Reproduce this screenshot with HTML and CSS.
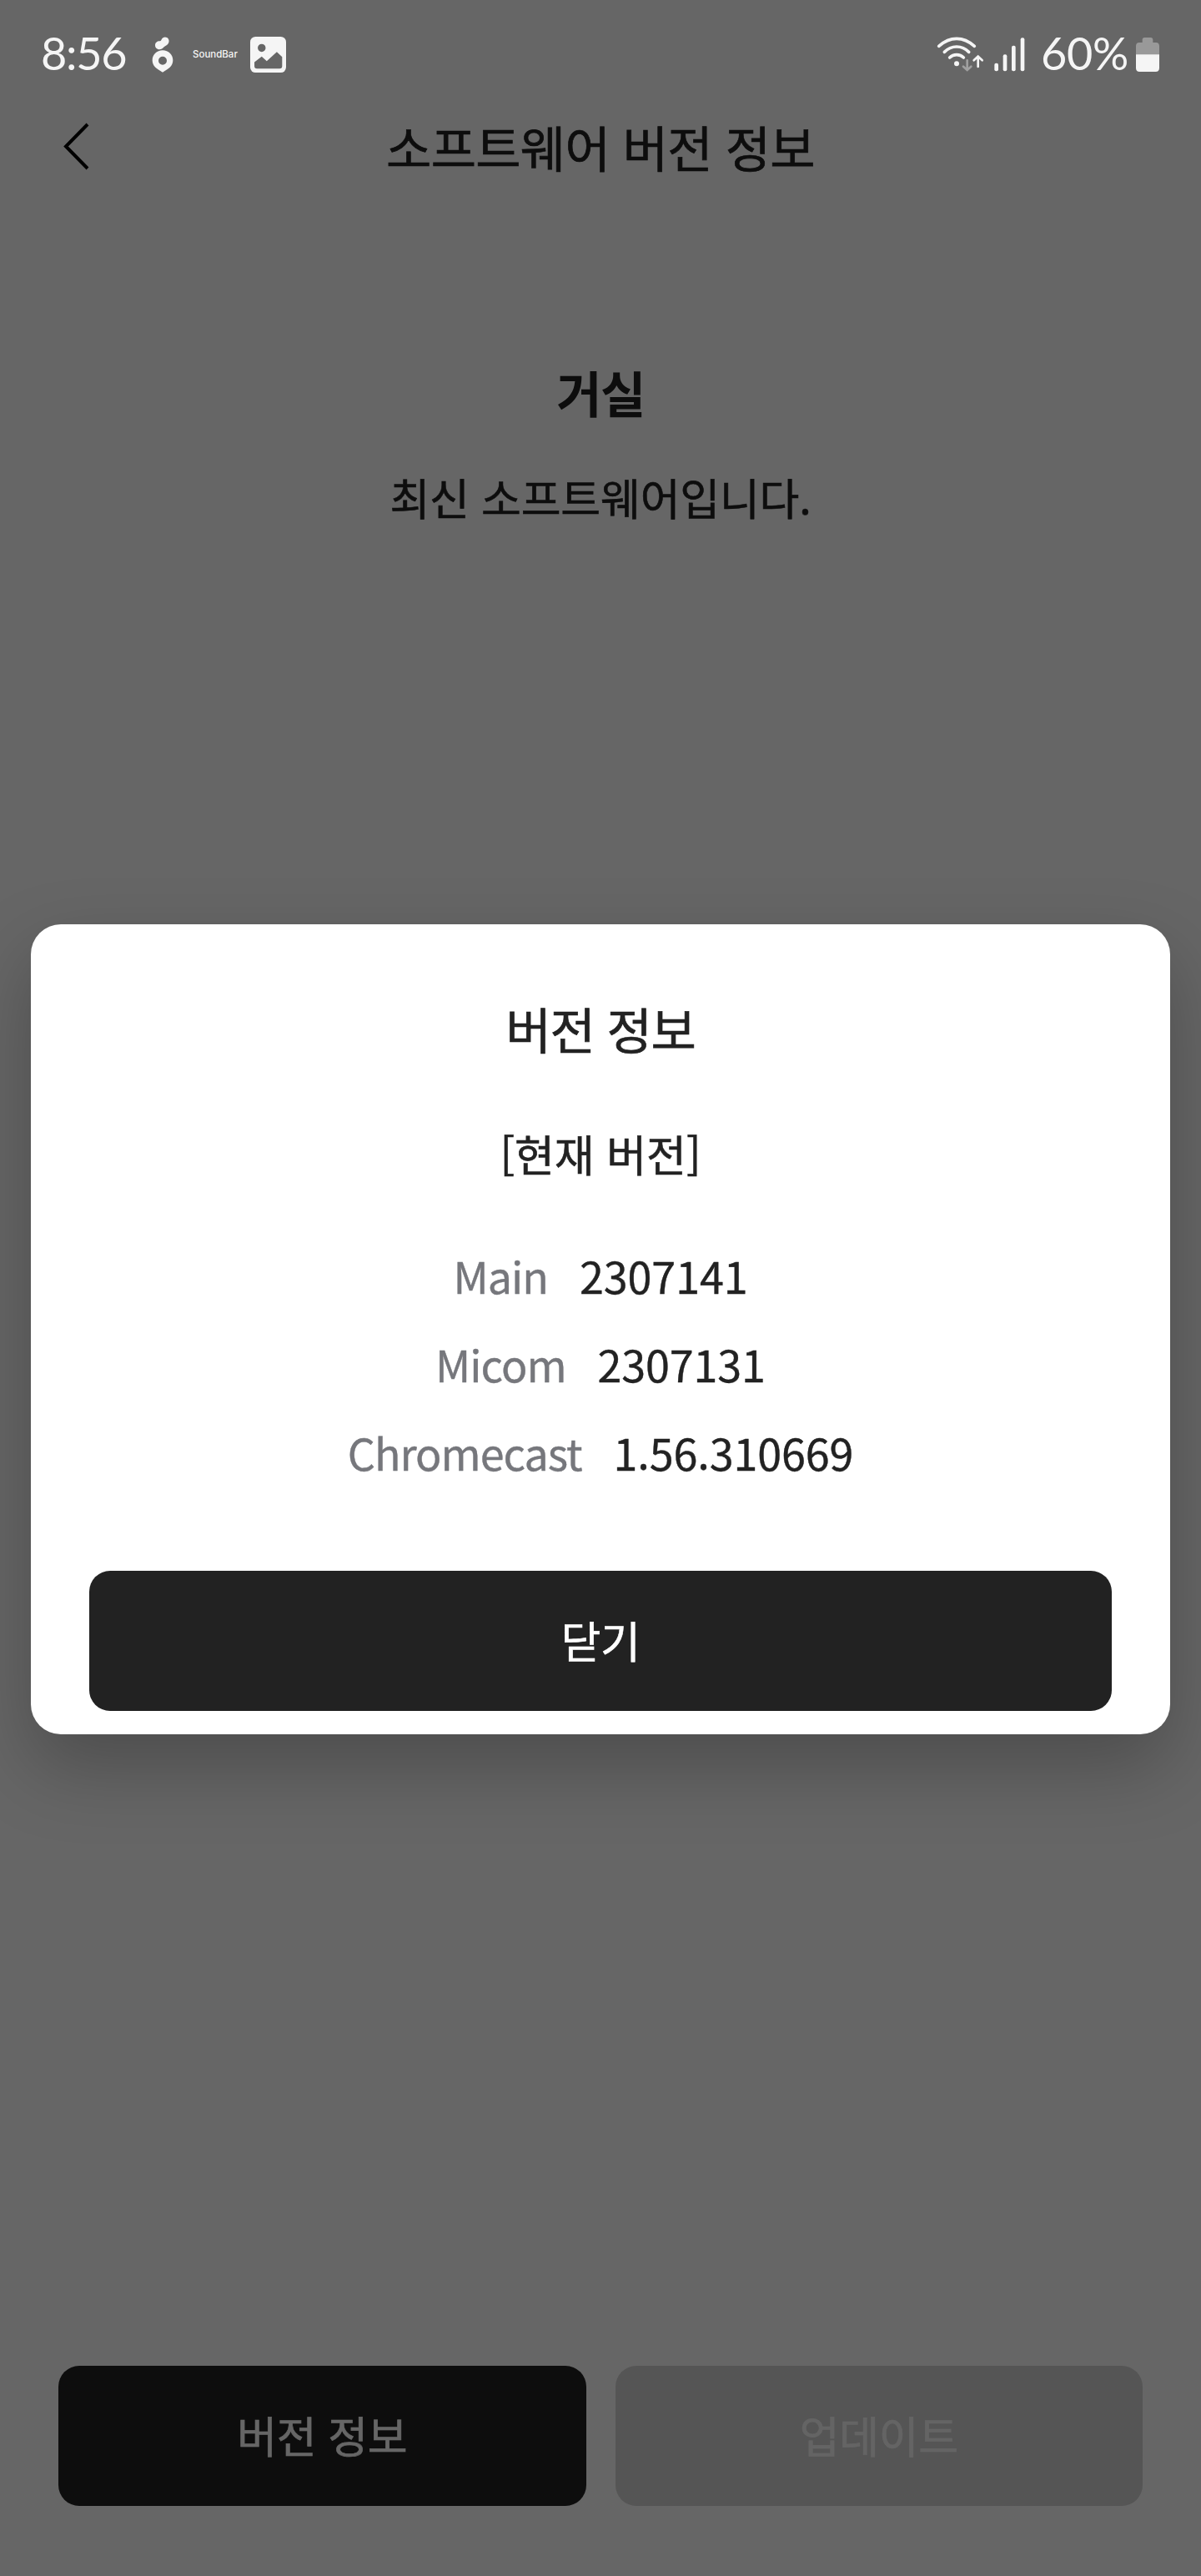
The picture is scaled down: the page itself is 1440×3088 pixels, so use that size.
FILE: index.html
```html
<!DOCTYPE html>
<html lang="ko">
<head>
  <meta charset="UTF-8">
  <meta name="viewport" content="width=device-width, initial-scale=1.0">
  <title>소프트웨어 버전 정보</title>
  <link rel="stylesheet" href="styles.css">
</head>
<body>
  <!-- Phone status bar -->
  <div class="status-bar">
    <div class="status-left">
      <span class="clock">8:56</span>
      <svg class="icon-carrot" width="26" height="43" viewBox="0 0 78 129" fill="#f5f5f5">
        <path d="M12 31c0-9 7-15 16-15 3 0 4-1 6-4 5-11 14-12 20-9 9 4 10 16 4 23-5 6-10 7-14 11-5 6-10 9-17 9-9 0-15-7-15-15z"/>
        <path fill-rule="evenodd" d="M39 49c21 0 37 15 37 36 0 20-15 31-37 43C17 116 2 105 2 85c0-21 16-36 37-36zm0 22a15 15 0 1 0 0 30 15 15 0 0 0 0-30z"/>
      </svg>
      <span class="app-name">SoundBar</span>
      <svg class="icon-picture" width="43" height="43" viewBox="0 0 128 128">
        <rect width="128" height="128" rx="19" fill="#f5f5f5"/>
        <circle cx="41" cy="40" r="14" fill="#666"/>
        <path d="M15 91l26-20 18 16 36-33 19 18v33c0 6-3 9-9 9H24c-6 0-9-3-9-9z" fill="#666"/>
      </svg>
    </div>
    <div class="status-right">
      <svg class="icon-wifi" width="57" height="42" viewBox="0 0 171 126" fill="none" stroke="#f5f5f5" stroke-width="11" stroke-linecap="round">
        <path d="M8 34Q38 7 72 7t64 27"/>
        <path d="M28 55Q47 36 72 36t44 19"/>
        <path d="M47 75Q57 65 72 65t25 10"/>
        <circle cx="72" cy="97" r="9" fill="#f5f5f5" stroke="none"/>
        <g stroke-width="8">
          <path d="M110 85v33M96 107l14 13 14-13" stroke="#a0a0a0"/>
          <path d="M149 108V73M134 85l15-14 15 14"/>
        </g>
      </svg>
      <svg class="icon-signal" width="37" height="42" viewBox="0 0 111 126" fill="#f5f5f5">
        <rect x="1" y="95" width="14" height="29" rx="6"/>
        <rect x="32" y="64" width="14" height="60" rx="6"/>
        <rect x="63" y="32" width="14" height="92" rx="6"/>
        <rect x="95" y="4" width="14" height="120" rx="6"/>
      </svg>
      <span class="battery-level">60%</span>
      <svg class="icon-battery" width="28" height="41" viewBox="0 0 84 123">
        <path d="M0 62V30c0-7 4-12 12-12h11V8c0-5 3-8 8-8h22c5 0 8 3 8 8v10h11c8 0 12 5 12 12v32z" fill="#999"/>
        <path d="M0 61h84v49c0 8-5 13-13 13H13c-8 0-13-5-13-13z" fill="#f5f5f5"/>
      </svg>
    </div>
  </div>

  <!-- Software version screen -->
  <div class="screen">
    <header class="top-bar">
      <svg class="icon-back" width="34" height="60" viewBox="0 0 34 60" fill="none" stroke="#000" stroke-width="4">
        <path d="M31 3L5 29.500l26 26.500"/>
      </svg>
      <h1>소프트웨어 버전 정보</h1>
    </header>
    <main class="device">
      <h2>거실</h2>
      <p>최신 소프트웨어입니다.</p>
    </main>
    <div class="actions">
      <button class="btn">버전 정보</button>
      <button class="btn" disabled>업데이트</button>
    </div>
  </div>

  <!-- Version dialog -->
  <div class="overlay">
    <div class="dialog">
      <h2>버전 정보</h2>
      <h3>[현재 버전]</h3>
      <ul class="versions">
        <li><span class="label">Main</span><span class="value">2307141</span></li>
        <li><span class="label">Micom</span><span class="value">2307131</span></li>
        <li><span class="label">Chromecast</span><span class="value">1.56.310669</span></li>
      </ul>
      <button class="btn close">닫기</button>
    </div>
  </div>
</body>
</html>
```
FILE: styles.css
```css
* {
  box-sizing: border-box;
  margin: 0;
  padding: 0;
}
body {
  position: relative;
  width: 1440px;
  height: 3088px;
  background: #fff;
  color: #222;
  font-family: "Noto Sans CJK KR", sans-serif;
  overflow: hidden;
}

/* Status bar */
.status-bar {
  position: relative;
  z-index: 20;
  display: flex;
  justify-content: space-between;
  height: 130px;
  padding: 0 50px 0 49px;
  color: #f5f5f5;
  font-family: Lato, sans-serif;
  font-size: 54px;
  line-height: 128px;
}
.status-left,
.status-right {
  display: flex;
  align-items: center;
}
.clock,
.battery-level {
  padding-bottom: 2px;
}
.clock {
  width: 133px;
  letter-spacing: -1.3px;
}
.app-name {
  width: 69px;
  margin-left: 23px;
  font-family: Inter, sans-serif;
  font-size: 11.5px;
  font-weight: 500;
}
.icon-signal {
  margin-left: 12px;
}
.battery-level {
  width: 114px;
  margin-left: 19px;
  letter-spacing: -0.3px;
}

/* Screen behind the dialog */
.screen {
  display: flex;
  flex-direction: column;
  height: 2958px;
}
.top-bar {
  display: flex;
  align-items: center;
  height: 92px;
  padding: 0 74px;
}
.top-bar h1 {
  flex: 1;
  margin-right: 34px;
  font-size: 59px;
  font-weight: 400;
  text-align: center;
  line-height: 92px;
  letter-spacing: -0.7px;
  -webkit-text-stroke: 0.7px;
}
.device {
  flex: 1;
  padding-top: 208px;
  text-align: center;
}
.device h2 {
  margin-bottom: 51px;
  font-size: 59px;
  font-weight: 700;
  line-height: 80px;
  letter-spacing: -1.5px;
}
.device p {
  font-size: 52px;
  line-height: 70px;
  letter-spacing: -0.2px;
  -webkit-text-stroke: 0.6px;
}
.actions {
  display: flex;
  gap: 35px;
  padding: 0 70px 84px;
}
.btn {
  flex: 1;
  height: 168px;
  padding-bottom: 3px;
  border: none;
  border-radius: 25px;
  background: #222;
  color: #fff;
  font-family: inherit;
  font-size: 52px;
  letter-spacing: -0.4px;
  -webkit-text-stroke: 0.6px;
}
.btn:disabled {
  background: #d4d4d4;
  color: #fafafa;
}

/* Dialog */
.overlay {
  position: absolute;
  inset: 0;
  z-index: 10;
  padding: 1108px 37px 0;
  background: rgba(0, 0, 0, 0.6);
}
.dialog {
  height: 971px;
  padding: 85px 70px 0;
  border-radius: 36px;
  background: #fff;
  box-shadow: 0 38px 90px rgba(0, 0, 0, 0.25);
  text-align: center;
}
.dialog h2 {
  margin-bottom: 75px;
  font-size: 59px;
  font-weight: 400;
  line-height: 80px;
  letter-spacing: -1.3px;
  -webkit-text-stroke: 0.7px;
}
.dialog h3 {
  margin-bottom: 58px;
  font-size: 52px;
  font-weight: 400;
  line-height: 70px;
  -webkit-text-stroke: 0.6px;
}
.versions {
  list-style: none;
  font-size: 52px;
  line-height: 106px;
}
.versions li {
  display: flex;
  justify-content: center;
  gap: 38px;
}
.label {
  color: #76777c;
  letter-spacing: -1px;
  -webkit-text-stroke: 0.4px;
}
.value {
  letter-spacing: -0.1px;
  -webkit-text-stroke: 0.4px;
}
.close {
  width: 100%;
  margin-top: 89px;
}
```
